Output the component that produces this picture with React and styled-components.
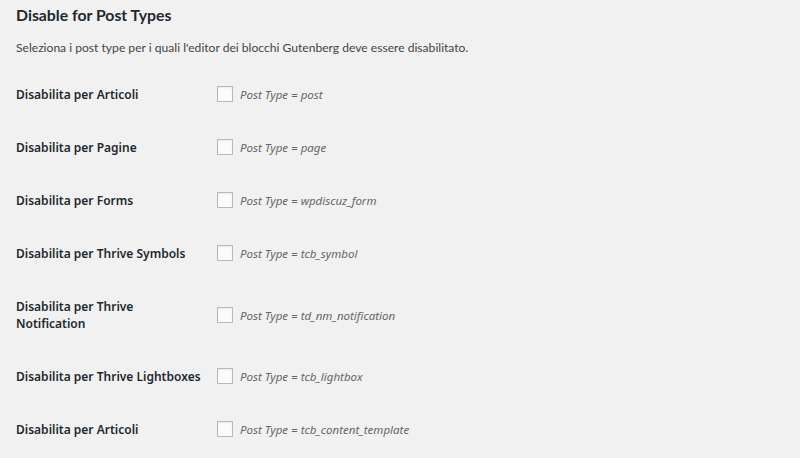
import React from "react";
import styled, { createGlobalStyle } from "styled-components";

const GlobalStyle = createGlobalStyle`
  html, body {
    margin: 0;
    padding: 0;
    background: #f1f1f1;
  }
  body {
    font-family: "Lato", "Noto Sans", sans-serif;
    color: #23282d;
  }
`;

const Wrap = styled.div`
  padding: 2px 16px 0;
`;

const Title = styled.h2`
  margin: 0;
  padding: 2px 0 0;
  font-size: 15.8px;
  font-weight: 700;
  line-height: 22px;
  color: #23282d;
`;

const Desc = styled.p`
  margin: 13px 0 11px;
  font-size: 12.1px;
  line-height: 18px;
  color: #444;
`;

const Table = styled.table`
  border-collapse: collapse;
  border-spacing: 0;
`;

const Th = styled.th`
  width: 185px;
  padding: 18px 16px 18px 0;
  text-align: left;
  vertical-align: middle;
  font-family: "Noto Sans", sans-serif;
  font-size: 12px;
  font-weight: 600;
  line-height: 17px;
  color: #23282d;
`;

const Td = styled.td`
  padding: 0;
  vertical-align: middle;
`;

const Field = styled.label`
  display: flex;
  align-items: center;
  gap: 7px;
`;

const Box = styled.span`
  display: inline-block;
  width: 14px;
  height: 14px;
  border: 1px solid #b4b9be;
  background: #fbfbfb;
  box-shadow: inset 0 1px 2px rgba(0, 0, 0, 0.07);
  flex-shrink: 0;
  margin-top: -1px;
`;

const Hint = styled.span`
  font-family: "Noto Sans", sans-serif;
  font-size: 11.5px;
  font-style: italic;
  color: #666;
  line-height: 17px;
`;

const rows = [
  ["Disabilita per Articoli", "post"],
  ["Disabilita per Pagine", "page"],
  ["Disabilita per Forms", "wpdiscuz_form"],
  ["Disabilita per Thrive Symbols", "tcb_symbol"],
  ["Disabilita per Thrive Notification", "td_nm_notification"],
  ["Disabilita per Thrive Lightboxes", "tcb_lightbox"],
  ["Disabilita per Articoli", "tcb_content_template"],
];

export default function App() {
  return (
    <>
      <GlobalStyle />
      <Wrap>
        <Title>Disable for Post Types</Title>
        <Desc>
          Seleziona i post type per i quali l'editor dei blocchi Gutenberg deve essere disabilitato.
        </Desc>
        <Table>
          <tbody>
            {rows.map(([label, type], i) => (
              <tr key={i}>
                <Th scope="row">{label}</Th>
                <Td>
                  <Field>
                    <Box />
                    <Hint>Post Type = {type}</Hint>
                  </Field>
                </Td>
              </tr>
            ))}
          </tbody>
        </Table>
      </Wrap>
    </>
  );
}
